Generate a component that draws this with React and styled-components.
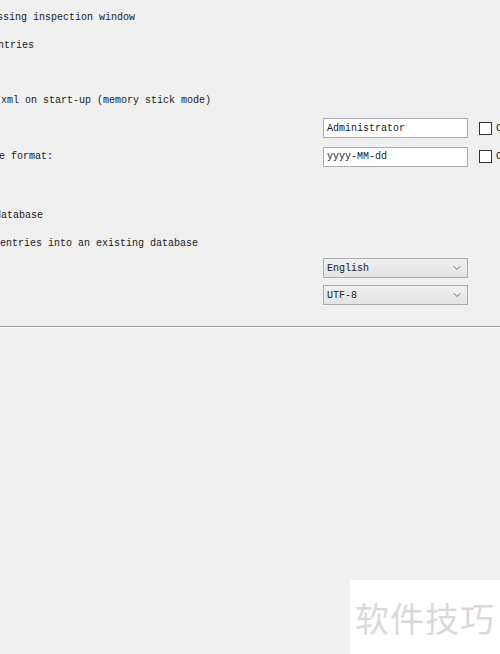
import React from "react";
import styled, { createGlobalStyle } from "styled-components";
import { ChevronDown } from "lucide-react";

const GlobalStyle = createGlobalStyle`
  html, body {
    margin: 0;
    padding: 0;
    background: #f0f0f0;
  }
  body {
    width: 500px;
    height: 654px;
    overflow: hidden;
  }
`;

const Dialog = styled.div`
  position: relative;
  width: 500px;
  height: 654px;
  overflow: hidden;
  background: #f0f0f0;
  font-family: "Liberation Mono", "DejaVu Sans Mono", monospace;
  font-size: 10px;
  color: #1a1a1a;
`;

const Options = styled.div`
  display: flex;
  flex-direction: column;
  padding-top: 4px;
`;

const Row = styled.div`
  display: flex;
  align-items: center;
  height: ${(p) => p.$h || 28}px;
  white-space: nowrap;
`;

const Spacer = styled.div`
  height: ${(p) => p.$h}px;
`;

const Label = styled.span`
  margin-left: ${(p) => p.$shift || 0}px;
  line-height: 12px;
`;

const FieldRow = styled(Row)`
  display: grid;
  grid-template-columns: 323px 145px 13px auto;
  column-gap: 0;
`;

const TextBox = styled.div`
  box-sizing: border-box;
  height: 20px;
  border: 1px solid #abadb3;
  background: #ffffff;
  padding: 0 3px;
  display: flex;
  align-items: center;
`;

const Check = styled.span`
  box-sizing: border-box;
  display: block;
  width: 13px;
  height: 13px;
  margin-left: 11px;
  border: 1px solid #333333;
  background: #ffffff;
`;

const CheckText = styled.span`
  margin-left: 15px;
`;

const Select = styled.div`
  box-sizing: border-box;
  width: 145px;
  height: 20px;
  margin-top: ${(p) => p.$gap || 0}px;
  margin-left: 323px;
  border: 1px solid #acacac;
  background: linear-gradient(#efefef, #e3e3e3);
  display: flex;
  align-items: center;
  justify-content: space-between;
  padding: 0 4px 0 3px;
  color: #222;
`;

const Separator = styled.div`
  margin-top: 21px;
  height: 1px;
  background: #a0a0a0;
  border-bottom: 1px solid #ffffff;
`;

const Watermark = styled.div`
  position: absolute;
  left: 350px;
  top: 580px;
  width: 150px;
  height: 74px;
  background: #ffffff;
  display: flex;
  align-items: center;
  justify-content: center;
  font-family: "Noto Sans CJK SC", "Noto Sans", sans-serif;
  font-size: 34px;
  letter-spacing: 1px;
  color: #d9d9d9;
`;

export default function App() {
  return (
    <Dialog>
      <GlobalStyle />
      <Options>
        <Row>
          <Label $shift={-3}>ssing inspection window</Label>
        </Row>
        <Row>
          <Label $shift={-2}>ntries</Label>
        </Row>
        <Spacer $h={28} />
        <Row $h={26}>
          <Label $shift={1}>xml on start-up (memory stick mode)</Label>
        </Row>
        <FieldRow>
          <span />
          <TextBox>Administrator</TextBox>
          <Check />
          <CheckText>Custom</CheckText>
        </FieldRow>
        <FieldRow $h={29}>
          <Label $shift={-1}>e format:</Label>
          <TextBox>yyyy-MM-dd</TextBox>
          <Check />
          <CheckText>Custom</CheckText>
        </FieldRow>
        <Spacer $h={31} />
        <Row>
          <Label $shift={-5}>database</Label>
        </Row>
        <Row>
          <Label>entries into an existing database</Label>
        </Row>
        <Select>
          English
          <ChevronDown size={12} color="#6a6a6a" strokeWidth={2} />
        </Select>
        <Select $gap={7}>
          UTF-8
          <ChevronDown size={12} color="#6a6a6a" strokeWidth={2} />
        </Select>
        <Separator />
      </Options>
      <Watermark>软件技巧</Watermark>
    </Dialog>
  );
}
